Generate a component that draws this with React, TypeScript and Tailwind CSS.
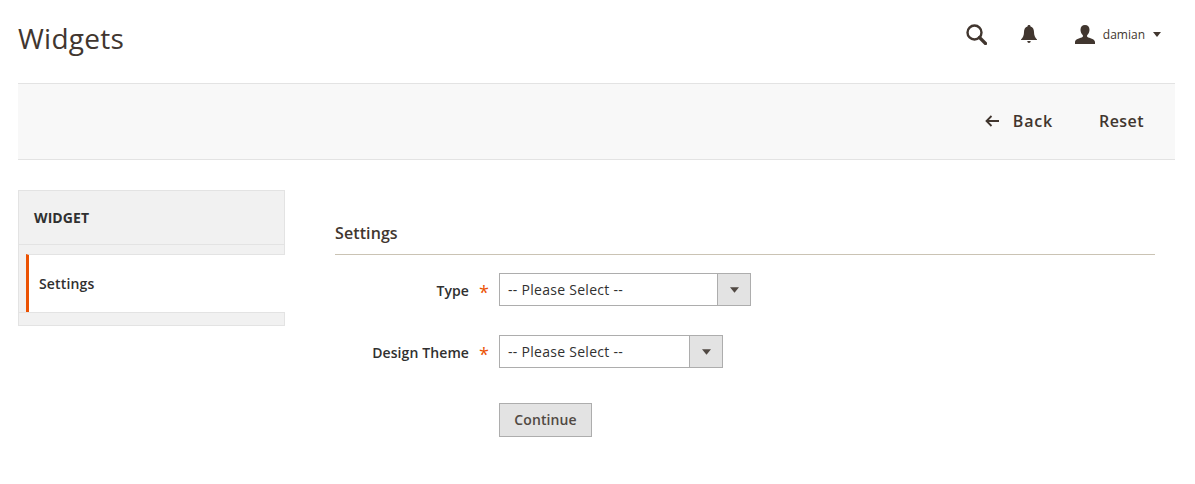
function Caret({ className }: { className: string }) {
  return (
    <svg viewBox="0 0 10 6" className={className}>
      <path d="M0 0h10L5 6z" fill="currentColor" />
    </svg>
  );
}

function SearchIcon() {
  return (
    <svg viewBox="0 0 21 21" className="w-[21px] h-[21px]">
      <circle cx="8.500" cy="8.500" r="7" fill="none" stroke="currentColor" strokeWidth="2.400" />
      <path d="M13.500 13.500L19.500 19.500" stroke="currentColor" strokeWidth="3.200" strokeLinecap="round" />
    </svg>
  );
}

function BellIcon() {
  return (
    <svg viewBox="0 0 16 18" className="w-4 h-[18px]">
      <path
        d="M8 0c1 0 1.500.6 1.500 1.400C12 2.100 13 4.200 13 7c0 3.500 1 5.500 3 7.500V15H0v-.5C2 12.500 3 10.500 3 7c0-2.800 1-4.900 3.500-5.600C6.500.6 7 0 8 0zM6.300 16h3.400c0 1.100-.7 2-1.700 2s-1.700-.9-1.700-2z"
        fill="currentColor"
      />
    </svg>
  );
}

function UserIcon() {
  return (
    <svg viewBox="0 0 20 19" className="w-5 h-[19px] text-[#41362f]">
      <path
        d="M10 0c2.800 0 4.500 2 4.500 4.800 0 2-.9 4-2.200 5.200-.4.400-.3 1.700.2 2.100C14 13.300 20 14 20 17v2H0v-2c0-3 6-3.700 7.500-4.900.5-.4.600-1.700.2-2.100C6.400 8.800 5.500 6.800 5.500 4.800 5.500 2 7.200 0 10 0z"
        fill="currentColor"
      />
    </svg>
  );
}

function BackArrow() {
  return (
    <svg viewBox="0 0 14 12" className="w-[14px] h-3 mt-[-1px]">
      <path d="M6.500 1L1.500 6l5 5M1.500 6H14" fill="none" stroke="currentColor" strokeWidth="1.800" />
    </svg>
  );
}

function SelectBox({ width }: { width: string }) {
  return (
    <div className={`flex h-[33px] bg-white border border-[#adadad] ${width}`}>
      <div className="flex-1 pl-2 text-sm tracking-[0.28px] leading-[31px] text-[#303030]">-- Please Select --</div>
      <div className="w-[33px] flex items-center justify-center bg-[#e3e3e3] border-l border-[#adadad]">
        <Caret className="w-[9px] h-[6px] text-[#514943]" />
      </div>
    </div>
  );
}

function FieldLabel({ text }: { text: string }) {
  return (
    <div className="w-[164px] flex justify-end items-center pr-[11px]">
      <span className="text-sm font-semibold tracking-[0.1px] text-[#303030] mt-[3px]">{text}</span>
      <span className="ml-[10px] w-[9px] text-[18px] font-medium leading-none text-[#eb5202] pt-1">*</span>
    </div>
  );
}

export default function App() {
  return (
    <div className="w-[1195px] h-[484px] bg-white overflow-hidden pl-[18px] pr-5 font-['Open_Sans',sans-serif] text-[#303030]">
      {/* Header */}
      <div className="h-[83px] flex items-center justify-between">
        <h1 className="text-[28px] tracking-[0.25px] text-[#41362f] mt-[-7px]">Widgets</h1>
        <div className="flex items-center mt-[-15px] text-[#41362f]">
          <SearchIcon />
          <div className="ml-[34px]">
            <BellIcon />
          </div>
          <div className="ml-[38px]">
            <UserIcon />
          </div>
          <span className="ml-[8px] mt-[1px] text-xs text-[#41362f]">damian</span>
          <Caret className="w-2 h-[5px] ml-[8px] mr-[14px]" />
        </div>
      </div>

      {/* Action bar */}
      <div className="h-[77px] flex items-center justify-end bg-[#f8f8f8] border-y border-[#e3e3e3] pr-[31px] text-[#41362f]">
        <BackArrow />
        <span className="ml-[14px] mt-[-2px] text-base font-semibold tracking-[0.8px]">Back</span>
        <span className="ml-[46px] mt-[-2px] text-base font-semibold tracking-[0.45px]">Reset</span>
      </div>

      <div className="flex mt-[30px]">
        {/* Sidebar */}
        <div className="w-[267px] h-[136px] bg-[#f1f1f1] border border-[#e3e3e3]">
          <div className="h-[54px] pl-[15px] flex items-center text-sm font-bold tracking-[0.1px] border-b border-[#e3e3e3] text-[#303030]">
            WIDGET
          </div>
          <div className="mt-[9px] border-b border-[#e3e3e3]">
            <div className="h-[58px] ml-[7px] mr-[-1px] bg-white border-l-[3px] border-t border-l-[#eb5202] border-t-[#e3e3e3] pl-[10px] flex items-center text-sm font-semibold tracking-[0.15px]">
              Settings
            </div>
          </div>
        </div>

        {/* Form */}
        <div className="w-[820px] ml-[50px] pt-[31px]">
          <div className="h-[34px] border-b border-[#cac3b4] text-base font-semibold tracking-[0.1px] text-[#41362f]">Settings</div>
          <div className="flex items-center mt-[18px]">
            <FieldLabel text="Type" />
            <SelectBox width="w-[252px]" />
          </div>
          <div className="flex items-center mt-[29px]">
            <FieldLabel text="Design Theme" />
            <SelectBox width="w-[224px]" />
          </div>
          <div className="ml-[164px] mt-[35px]">
            <button className="w-[93px] h-[34px] bg-[#e3e3e3] border border-[#adadad] text-sm font-semibold tracking-[0.1px] text-[#514943]">
              Continue
            </button>
          </div>
        </div>
      </div>
    </div>
  );
}
